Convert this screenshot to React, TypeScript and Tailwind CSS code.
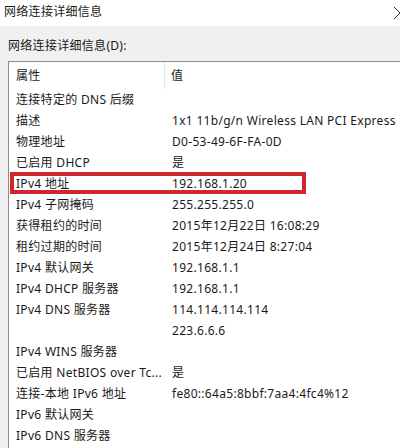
// 网络连接详细信息 对话框
const rows: [string, string][] = [
  ['连接特定的 DNS 后缀', ''],
  ['描述', '1x1 11b/g/n Wireless LAN PCI Express'],
  ['物理地址', 'D0-53-49-6F-FA-0D'],
  ['已启用 DHCP', '是'],
  ['IPv4 地址', '192.168.1.20'],
  ['IPv4 子网掩码', '255.255.255.0'],
  ['获得租约的时间', '2015年12月22日 16:08:29'],
  ['租约过期的时间', '2015年12月24日 8:27:04'],
  ['IPv4 默认网关', '192.168.1.1'],
  ['IPv4 DHCP 服务器', '192.168.1.1'],
  ['IPv4 DNS 服务器', '114.114.114.114'],
  ['', '223.6.6.6'],
  ['IPv4 WINS 服务器', ''],
  ['已启用 NetBIOS over Tc...', '是'],
  ['连接-本地 IPv6 地址', 'fe80::64a5:8bbf:7aa4:4fc4%12'],
  ['IPv6 默认网关', ''],
  ['IPv6 DNS 服务器', ''],
]

export default function App() {
  return (
    <div
      className="relative w-[400px] h-[448px] overflow-hidden bg-[#f0f0f0] text-[12px] tracking-[0.3px] text-[#1a1a1a] flex flex-col"
      style={{ fontFamily: '"Noto Sans", "Noto Sans CJK SC", sans-serif' }}
    >
      <div className="h-[26px] bg-white flex items-center justify-between pl-[4px] shrink-0">
        <span className="-mt-[2px]">网络连接详细信息</span>
        <svg width="14" height="14" viewBox="0 0 14 14" className="-mr-[7px] shrink-0">
          <path d="M1 1 L13 13 M13 1 L1 13" stroke="#333" strokeWidth="1" fill="none" />
        </svg>
      </div>

      <div className="h-[35px] px-[8px] flex items-end pb-[6px] shrink-0">
        网络连接详细信息(D):
      </div>

      <div className="ml-[8px] flex-1 bg-white border-l border-t border-[#8c8c8c]">
        <div className="grid grid-cols-[156px_1fr] h-[27px]">
          <div className="pl-[7px] flex items-center border-r border-[#e5e5e5]">属性</div>
          <div className="pl-[6px] flex items-center">值</div>
        </div>
        {rows.map(([k, v], i) => (
          <div key={i} className="grid grid-cols-[156px_1fr] h-[21px] items-center whitespace-nowrap">
            <div className="pl-[7px]">{k}</div>
            <div className="pl-[7px]">{v}</div>
          </div>
        ))}
      </div>

      <div className="absolute left-[10px] top-[172px] w-[296px] h-[22px] border-4 border-[#d0262e]" />
    </div>
  )
}
